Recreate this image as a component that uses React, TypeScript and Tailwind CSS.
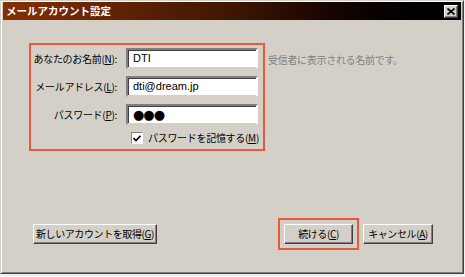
import React from 'react';

const FONT = { fontFamily: '"Noto Sans CJK JP", "Noto Sans", sans-serif' };

function U({ children }: { children: React.ReactNode }) {
  return <span className="underline underline-offset-1">{children}</span>;
}

function Field({ label, value, big }: { label: React.ReactNode; value: string; big?: boolean }) {
  return (
    <div className="flex items-center">
      <div className="w-[86px] whitespace-nowrap text-right text-[10px] leading-none tracking-[-0.3px] text-black">{label}</div>
      <div className="ml-[9px] flex h-[21px] w-[132px] items-center border-2 border-t-[#808080] border-l-[#808080] border-r-white border-b-[#d4d0c8] bg-white pl-[5px] shadow-[inset_1px_1px_0_#404040]">
        {big ? (
          <span className="text-[13px] leading-none tracking-[-1px] text-black" style={{ fontFamily: '"DejaVu Sans", sans-serif' }}>
            {value}
          </span>
        ) : (
          <span className="text-[11px] leading-none text-black" style={{ fontFamily: '"Liberation Sans", Arial, sans-serif' }}>
            {value}
          </span>
        )}
      </div>
    </div>
  );
}

function Btn({ children, w }: { children: React.ReactNode; w: string }) {
  return (
    <button
      className={`flex h-[20px] ${w} items-center justify-center whitespace-nowrap border border-t-white border-l-white border-r-[#404040] border-b-[#404040] bg-[#d4d0c8] text-[10px] leading-none tracking-[-0.4px] text-black shadow-[inset_-1px_-1px_0_#808080]`}
    >
      {children}
    </button>
  );
}

export default function App() {
  return (
    <div className="h-[277px] w-[465px] bg-[#f0f0f0]" style={FONT}>
      <div className="flex h-[274px] w-[464px] flex-col border border-t-[#d4d0c8] border-l-[#d4d0c8] border-r-[#404040] border-b-[#404040] bg-[#d4d0c8] shadow-[inset_1px_1px_0_#fff,inset_-1px_-1px_0_#808080]">
        {/* タイトルバー */}
        <div className="mx-[2px] mt-[1px] flex h-[18px] items-center justify-between bg-gradient-to-r from-[#862f05] via-[#3f1603] to-black pl-[3px] pr-[3px]">
          <span className="text-[10.5px] font-bold leading-none text-white">メールアカウント設定</span>
          <div className="flex h-[13px] w-[14px] items-center justify-center border border-t-white border-l-white border-r-[#404040] border-b-[#404040] bg-[#d4d0c8] shadow-[inset_-1px_-1px_0_#808080]">
            <svg width="8" height="7" viewBox="0 0 8 7">
              <path d="M0.5 0.5 L7.5 6.5 M7.5 0.5 L0.5 6.5" stroke="#000" strokeWidth="1.6" />
            </svg>
          </div>
        </div>

        {/* 入力欄 */}
        <div className="ml-[28px] mt-[23px] flex items-start">
          <div className="flex w-[236px] flex-col gap-[7px] border-2 border-[#e9573f] pt-[3px] pb-[5px]">
            <Field label={<>あなたのお名前(<U>N</U>):</>} value="DTI" />
            <Field label={<>メールアドレス(<U>L</U>):</>} value="dti@dream.jp" />
            <Field label={<>パスワード(<U>P</U>):</>} value="●●●" big />
            <div className="flex items-center pl-[100px]">
              <div className="flex h-[12px] w-[12px] items-center justify-center border border-t-[#808080] border-l-[#808080] border-r-white border-b-white bg-white">
                <svg width="8" height="7" viewBox="0 0 8 7">
                  <path d="M0.5 3 L3 5.5 L7.5 0.8" fill="none" stroke="#000" strokeWidth="1.6" />
                </svg>
              </div>
              <span className="ml-[5px] whitespace-nowrap text-[10px] leading-none tracking-[-0.3px] text-black">
                パスワードを記憶する(<U>M</U>)
              </span>
            </div>
          </div>
          <span className="ml-[3px] mt-[12px] whitespace-nowrap text-[10px] leading-none tracking-[-0.3px] text-[#808080]">受信者に表示される名前です。</span>
        </div>

        <div className="flex-1" />

        {/* ボタン */}
        <div className="mb-[23px] ml-[32px] mr-[30px] flex items-center justify-between">
          <Btn w="w-[124px]">
            新しいアカウントを取得(<U>G</U>)
          </Btn>
          <div className="flex items-center gap-[4px]">
            <div className="border-2 border-[#e9573f] px-[4px] py-[4px]">
              <Btn w="w-[69px]">
                続ける(<U>C</U>)
              </Btn>
            </div>
            <Btn w="w-[70px]">
              キャンセル(<U>A</U>)
            </Btn>
          </div>
        </div>
      </div>
    </div>
  );
}
